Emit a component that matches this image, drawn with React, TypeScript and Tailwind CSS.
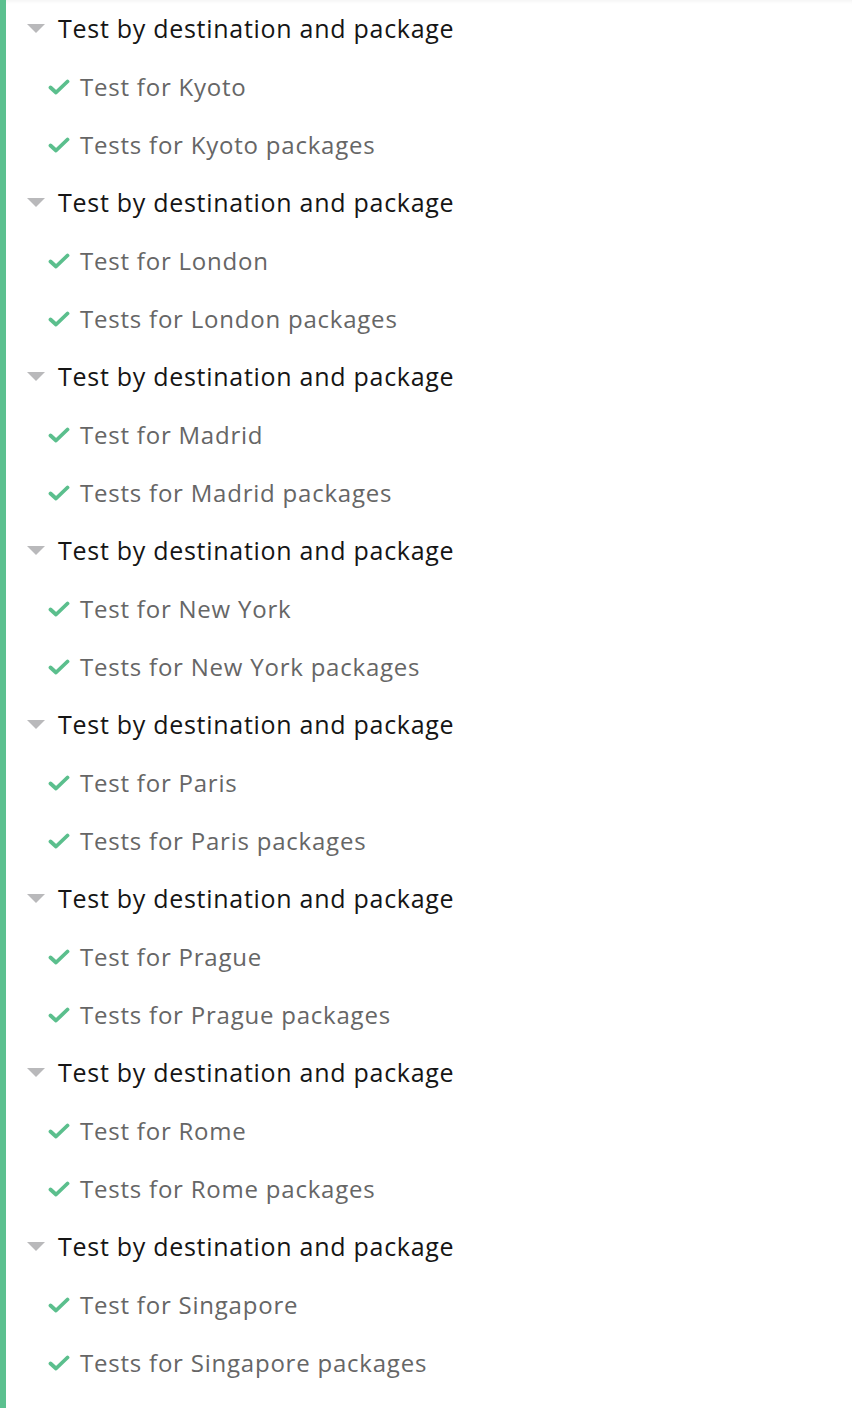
import React from 'react';

const cities = ['Kyoto', 'London', 'Madrid', 'New York', 'Paris', 'Prague', 'Rome', 'Singapore'];

const Caret = () => (
  <svg width="18" height="10" viewBox="0 0 18 10" className="shrink-0">
    <path d="M0 0 L18 0 L9 9 Z" fill="#b9b9bb" />
  </svg>
);

const Check = () => (
  <svg width="22" height="18" viewBox="0 0 22 18" className="shrink-0">
    <path d="M2.5 9.5 L8 14.5 L19.5 3.5" fill="none" stroke="#5bbf8d" strokeWidth="3.8" strokeLinecap="round" strokeLinejoin="round" />
  </svg>
);

export default function App() {
  return (
    <div className="w-[852px] h-[1408px] bg-white flex overflow-hidden" style={{ fontFamily: '"Open Sans", "Noto Sans", sans-serif' }}>
      <div className="w-[6px] bg-[#5bc08f] shrink-0" />
      <div className="flex-1 shadow-[inset_0_4px_4px_-3px_rgba(0,0,0,0.06)]">
        {cities.map(city => (
          <div key={city}>
            <div className="h-[58px] flex items-center pl-[21px] gap-[13px]">
              <Caret />
              <span className="text-[25px] tracking-[0.72px] text-[#151515]">Test by destination and package</span>
            </div>
            <div className="h-[58px] flex items-center pl-[42px] gap-[10px]">
              <Check />
              <span className="text-[24px] tracking-[0.78px] text-[#666666]">Test for {city}</span>
            </div>
            <div className="h-[58px] flex items-center pl-[42px] gap-[10px]">
              <Check />
              <span className="text-[24px] tracking-[0.78px] text-[#666666]">Tests for {city} packages</span>
            </div>
          </div>
        ))}
      </div>
    </div>
  );
}
